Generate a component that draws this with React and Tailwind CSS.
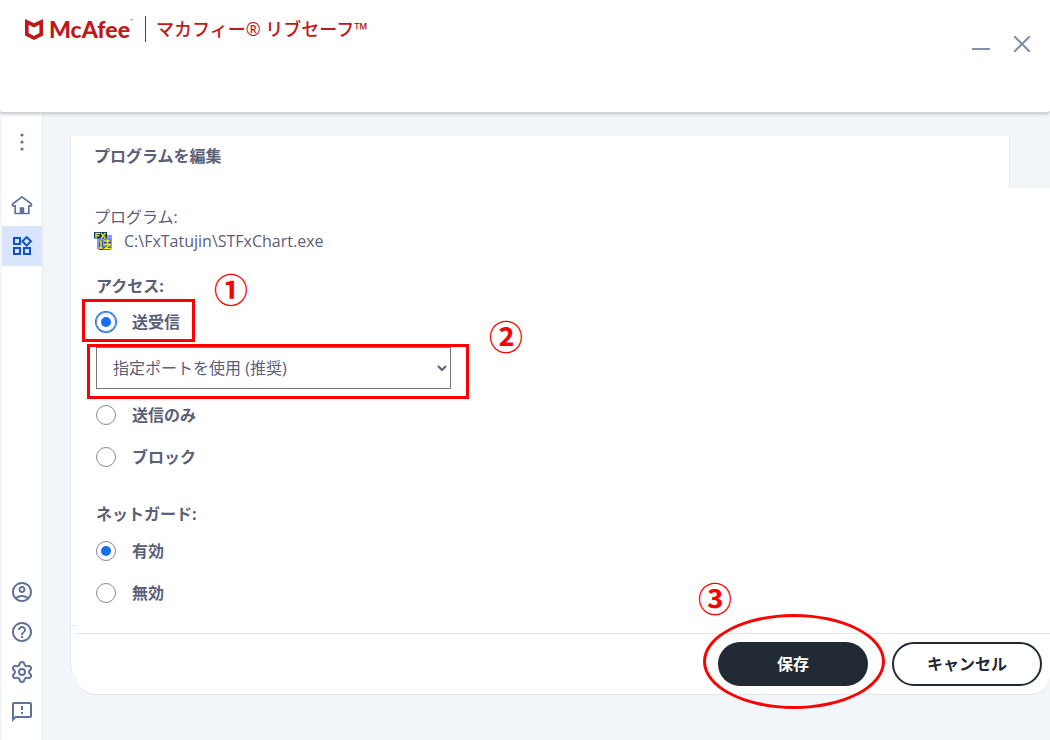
import { useState } from 'react';
import { Settings } from 'lucide-react';
import { MdHelpOutline, MdOutlineAccountCircle, MdOutlineFeedback, MdOutlineWidgets } from 'react-icons/md';

function ShieldLogo() {
  return (
    <svg width="18" height="21" viewBox="0 0 18 21" fill="#c01818" aria-hidden="true">
      <path fillRule="evenodd" d="M0 0l9 4.2L18 0v16.4L9 21l-9-4.6zM3.6 5.8v8.3l5.4 2.8 5.4-2.8V5.8L9 8.4z" />
    </svg>
  );
}

function DotsIcon() {
  return (
    <svg width="4" height="18" viewBox="0 0 4 18" fill="currentColor" aria-hidden="true">
      <circle cx="2" cy="2" r="1.6" />
      <circle cx="2" cy="9" r="1.6" />
      <circle cx="2" cy="16" r="1.6" />
    </svg>
  );
}

function HomeIcon() {
  return (
    <svg width="22" height="22" viewBox="0 0 22 22" fill="none" stroke="currentColor" strokeWidth="1.7" strokeLinejoin="round" aria-hidden="true">
      <path d="M11 1.8L1.6 9v1.8h2.6v7.7h13.6v-7.7h2.6V9z" />
      <path d="M9.6 18v-5h2.8v5" fill="currentColor" />
    </svg>
  );
}

function ProgramIcon() {
  return (
    <svg width="18" height="18" viewBox="0 0 18 18" aria-hidden="true">
      <path fill="#8f94f5" d="M3 3h15v14H3z" />
      <path fill="#0b3a6b" d="M0 0h13v6.5H0z" />
      <path stroke="#1f3f8f" strokeWidth="3.4" fill="none" d="M7 8v9M5 16.5h12M10 9.5h7M13.5 8v9" />
      <path stroke="#d8e01c" strokeWidth="1.5" fill="none" d="M2 6V1.5h4M2 3.7h3M7 1l4.5 5.5M11.5 1L7 6.5" />
      <path stroke="#f0f01e" strokeWidth="1.5" fill="none" d="M5.5 9H7v7M5 16h4M10 9h6.5M10.5 12.5h6M13.5 7.5v5M16 12.5L11 16.5h6.5" />
    </svg>
  );
}

function NavButton({ label, active, children }) {
  return (
    <button
      type="button"
      aria-label={label}
      className={`flex h-10 w-10 items-center justify-center ${active ? 'bg-[#d8e5fd] text-[#0f52cc]' : 'text-[#5f7398]'}`}
    >
      {children}
    </button>
  );
}

function RadioOption({ name, value, current, onChange, focused, children }) {
  return (
    <label className="flex h-6 w-fit items-center gap-4 font-bold">
      <input
        type="radio"
        name={name}
        value={value}
        checked={current === value}
        onChange={() => onChange(value)}
        className={`grid h-5 w-5 appearance-none place-items-center rounded-full border checked:before:h-[10px] checked:before:w-[10px] checked:before:rounded-full checked:before:bg-[#1570f0] ${
          focused ? 'border-[#5f86c8] ring-1 ring-[#1570f0]' : 'border-[#7f899f]'
        }`}
      />
      {children}
    </label>
  );
}

function StepMark({ className, children }) {
  return (
    <span className={`pointer-events-none absolute text-[34px] leading-8 font-bold text-[#ff0000] ${className}`}>
      {children}
    </span>
  );
}

export default function App() {
  const [access, setAccess] = useState('both');
  const [guard, setGuard] = useState('on');

  return (
    <div className="flex min-h-screen flex-col bg-[#f2f6f9] font-['Open_Sans','Noto_Sans_CJK_JP',sans-serif] text-base text-[#5a6078]">
      <header className="z-10 flex h-[114px] items-start justify-between rounded-b-sm border-b-2 border-[#d3d5d8] bg-white pt-4 pr-5 pl-[25px] shadow-sm">
        <div className="flex items-center text-[#c01818]">
          <ShieldLogo />
          <span className="ml-[6px] font-['Lato'] text-[23px] leading-6 font-black">McAfee</span>
          <span className="mb-4 text-[4px] leading-none">™</span>
          <h1 className="ml-3 border-l border-[#8f2020] pl-[10px] text-lg leading-[26px] font-medium">
            マカフィー® リブセーフ™
          </h1>
        </div>
        <div className="flex gap-6 pt-4 text-[#7f8fb0]">
          <button type="button" aria-label="最小化" className="flex h-6 items-center">
            <svg width="18" height="24" viewBox="0 0 18 24" stroke="currentColor" strokeWidth="2">
              <path d="M0 17h18" />
            </svg>
          </button>
          <button type="button" aria-label="閉じる" className="flex h-6 items-center">
            <svg width="16" height="16" viewBox="0 0 16 16" stroke="currentColor" strokeWidth="2">
              <path d="M0 0l16 16M16 0L0 16" />
            </svg>
          </button>
        </div>
      </header>

      <div className="flex flex-1">
        <nav className="ml-[2px] flex w-[41px] flex-col justify-between border-r border-[#e8ebee] bg-white pt-2 pb-2">
          <div>
            <NavButton label="メニュー"><DotsIcon /></NavButton>
            <div className="mt-6">
              <NavButton label="ホーム"><HomeIcon /></NavButton>
              <NavButton label="マイ プロテクション" active><MdOutlineWidgets size={24} /></NavButton>
            </div>
          </div>
          <div>
            <NavButton label="アカウント"><MdOutlineAccountCircle size={24} /></NavButton>
            <NavButton label="ヘルプ"><MdHelpOutline size={24} /></NavButton>
            <NavButton label="設定"><Settings size={24} /></NavButton>
            <NavButton label="フィードバック"><MdOutlineFeedback size={24} /></NavButton>
          </div>
        </nav>

        <main className="flex-1 pt-[22px] pl-[27px]">
          <div className="mr-10 h-[52px] border-x border-[#e2e4ee] bg-white pt-2 pl-[23px]">
            <h2 className="leading-6 font-bold">プログラムを編集</h2>
          </div>

          <div className="border-l border-[#e2e4ee] bg-white pt-[17px] pb-5 pl-[23px]">
            <p className="leading-6">プログラム:</p>
            <p className="flex h-6 items-center gap-3">
              <ProgramIcon />
              C:\FxTatujin\STFxChart.exe
            </p>

            <fieldset className="mt-[21px] pl-[2px]">
              <legend className="leading-6 font-bold">アクセス:</legend>
              <div className="relative mt-3 w-fit">
                <RadioOption name="access" value="both" current={access} onChange={setAccess} focused>
                  送受信
                </RadioOption>
                <div className="pointer-events-none absolute -top-[11px] -right-[15px] -bottom-2 -left-[14px] border-3 border-[#ff0000]" />
                <StepMark className="-top-9 left-[118px]">①</StepMark>
              </div>
              <div className="relative mt-[13px] w-[355px]">
                <select
                  aria-label="ポート"
                  className="h-[42px] w-full border border-[#767676] bg-white pl-3"
                  defaultValue="ports"
                >
                  <option value="ports">指定ポートを使用 (推奨)</option>
                  <option value="all">すべてのポートを使用</option>
                </select>
                <div className="pointer-events-none absolute -top-[3px] -right-[18px] -bottom-[10px] -left-[9px] border-3 border-[#ff0000]" />
                <StepMark className="-top-[26px] left-[393px]">②</StepMark>
              </div>
              <div className="mt-[14px] flex flex-col gap-[18px]">
                <RadioOption name="access" value="out" current={access} onChange={setAccess}>
                  送信のみ
                </RadioOption>
                <RadioOption name="access" value="block" current={access} onChange={setAccess}>
                  ブロック
                </RadioOption>
              </div>
            </fieldset>

            <fieldset className="mt-[33px] pl-[2px]">
              <legend className="leading-6 font-bold">ネットガード:</legend>
              <div className="mt-[13px] flex flex-col gap-[18px]">
                <RadioOption name="guard" value="on" current={guard} onChange={setGuard}>
                  有効
                </RadioOption>
                <RadioOption name="guard" value="off" current={guard} onChange={setGuard}>
                  無効
                </RadioOption>
              </div>
            </fieldset>
          </div>

          <footer className="flex items-start">
            <div className="h-[52px] w-[6px] rounded-bl-[6px_14px] border-t border-l border-[#e2e4ee] bg-white" />
            <div className="flex-1 rounded-b-[20px] border-b border-[#e2e4ee] bg-white pt-2">
              <div className="flex justify-end gap-6 border-t border-[#e2e4ee] py-2 pr-2">
                <div className="relative">
                  <button type="button" className="h-11 w-[150px] rounded-full bg-[#212934] font-bold text-white">
                    保存
                  </button>
                  <div className="pointer-events-none absolute -top-7 -right-[17px] -bottom-[23px] -left-[15px] rounded-[50%] border-3 border-[#ff0000]" />
                  <StepMark className="-top-[59px] -left-5">③</StepMark>
                </div>
                <button type="button" className="h-11 w-[150px] rounded-full border-2 border-[#212934] font-bold text-[#212934]">
                  キャンセル
                </button>
              </div>
            </div>
          </footer>
        </main>
      </div>
    </div>
  );
}
